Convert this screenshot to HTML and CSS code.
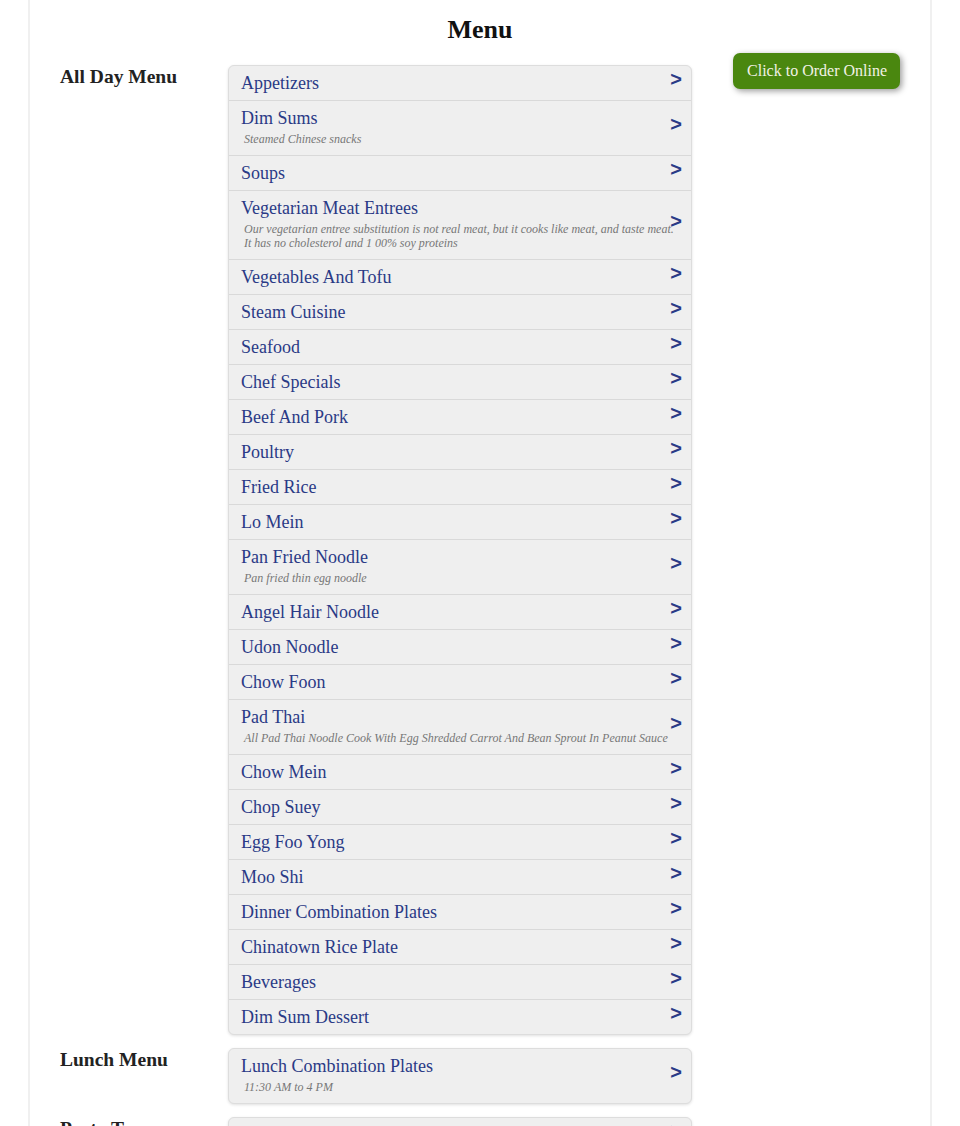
FILE: index.html
```html
<!DOCTYPE html>
<html>
<head>
<meta charset="utf-8">
<title>Menu</title>
<link rel="stylesheet" href="styles.css">
</head>
<body>
<div class="page">
  <h1 class="title">Menu</h1>
  <div class="layout">
    <div class="menus">
      <section class="group">
        <h2 class="group-label">All Day Menu</h2>
        <ul class="list">
          <li class="row"><span class="name">Appetizers</span><span class="chev">&gt;</span></li>
          <li class="row"><span class="name">Dim Sums</span><span class="desc">Steamed Chinese snacks</span><span class="chev">&gt;</span></li>
          <li class="row"><span class="name">Soups</span><span class="chev">&gt;</span></li>
          <li class="row"><span class="name">Vegetarian Meat Entrees</span><span class="desc">Our vegetarian entree substitution is not real meat, but it cooks like meat, and taste meat.<br>It has no cholesterol and 1 00% soy proteins</span><span class="chev">&gt;</span></li>
          <li class="row"><span class="name">Vegetables And Tofu</span><span class="chev">&gt;</span></li>
          <li class="row"><span class="name">Steam Cuisine</span><span class="chev">&gt;</span></li>
          <li class="row"><span class="name">Seafood</span><span class="chev">&gt;</span></li>
          <li class="row"><span class="name">Chef Specials</span><span class="chev">&gt;</span></li>
          <li class="row"><span class="name">Beef And Pork</span><span class="chev">&gt;</span></li>
          <li class="row"><span class="name">Poultry</span><span class="chev">&gt;</span></li>
          <li class="row"><span class="name">Fried Rice</span><span class="chev">&gt;</span></li>
          <li class="row"><span class="name">Lo Mein</span><span class="chev">&gt;</span></li>
          <li class="row"><span class="name">Pan Fried Noodle</span><span class="desc">Pan fried thin egg noodle</span><span class="chev">&gt;</span></li>
          <li class="row"><span class="name">Angel Hair Noodle</span><span class="chev">&gt;</span></li>
          <li class="row"><span class="name">Udon Noodle</span><span class="chev">&gt;</span></li>
          <li class="row"><span class="name">Chow Foon</span><span class="chev">&gt;</span></li>
          <li class="row"><span class="name">Pad Thai</span><span class="desc">All Pad Thai Noodle Cook With Egg Shredded Carrot And Bean Sprout In Peanut Sauce</span><span class="chev">&gt;</span></li>
          <li class="row"><span class="name">Chow Mein</span><span class="chev">&gt;</span></li>
          <li class="row"><span class="name">Chop Suey</span><span class="chev">&gt;</span></li>
          <li class="row"><span class="name">Egg Foo Yong</span><span class="chev">&gt;</span></li>
          <li class="row"><span class="name">Moo Shi</span><span class="chev">&gt;</span></li>
          <li class="row"><span class="name">Dinner Combination Plates</span><span class="chev">&gt;</span></li>
          <li class="row"><span class="name">Chinatown Rice Plate</span><span class="chev">&gt;</span></li>
          <li class="row"><span class="name">Beverages</span><span class="chev">&gt;</span></li>
          <li class="row"><span class="name">Dim Sum Dessert</span><span class="chev">&gt;</span></li>
        </ul>
      </section>
      <section class="group">
        <h2 class="group-label">Lunch Menu</h2>
        <ul class="list">
          <li class="row"><span class="name">Lunch Combination Plates</span><span class="desc">11:30 AM to 4 PM</span><span class="chev">&gt;</span></li>
        </ul>
      </section>
      <section class="group">
        <h2 class="group-label">Party Trays</h2>
        <ul class="list">
          <li class="row"><span class="name">Party Trays</span><span class="chev">&gt;</span></li>
        </ul>
      </section>
    </div>
    <aside class="side">
      <a class="order-btn" href="#">Click to Order Online</a>
    </aside>
  </div>
</div>
</body>
</html>
```

FILE: styles.css
```css
html, body {
  margin: 0;
  padding: 0;
  background: #ffffff;
}

body {
  font-family: "Liberation Serif", "Times New Roman", serif;
  color: #222222;
}

.page {
  margin: 0 28px;
  border-left: 2px solid #f0f0f0;
  border-right: 2px solid #f0f0f0;
  min-height: 1200px;
  padding: 0 30px;
}

.title {
  margin: 0;
  padding: 14px 0 7px;
  font-size: 26px;
  line-height: 32px;
  font-weight: bold;
  text-align: center;
  color: #111111;
}

.layout {
  display: flex;
  align-items: flex-start;
}

.menus {
  display: flex;
  flex-direction: column;
  gap: 13px;
  padding-top: 12px;
}

.group {
  display: flex;
  align-items: flex-start;
}

.group-label {
  width: 168px;
  flex: none;
  margin: 0;
  padding-top: 1px;
  font-size: 19.5px;
  line-height: 22px;
  font-weight: bold;
  color: #222222;
}

.list {
  width: 462px;
  margin: 0;
  padding: 0;
  list-style: none;
  background: #efefef;
  border: 1px solid #dddddd;
  border-radius: 6px;
  box-shadow: 0 1px 3px rgba(0, 0, 0, 0.12);
}

.row {
  position: relative;
  display: flex;
  flex-direction: column;
  padding: 6px 12px;
  border-top: 1px solid #d9d9d9;
}

.row:first-child {
  border-top: none;
}

.name {
  font-size: 18px;
  line-height: 22px;
  color: #2a3a86;
}

.desc {
  margin: 3px 0 3px;
  padding-left: 3px;
  font-size: 12px;
  line-height: 14px;
  font-style: italic;
  color: #777777;
}

.chev {
  position: absolute;
  right: 9px;
  top: 50%;
  transform: translateY(-50%);
  margin-top: -4px;
  font-family: "Liberation Sans", Arial, sans-serif;
  font-weight: bold;
  font-size: 20px;
  line-height: 22px;
  color: #2a3a86;
}

.side {
  flex: 1;
  display: flex;
  justify-content: flex-end;
}

.order-btn {
  display: inline-block;
  padding: 8px 13px 8px 14px;
  font-size: 16px;
  line-height: 20px;
  color: #f2f2e6;
  background: #4a870f;
  border-radius: 7px;
  text-decoration: none;
  box-shadow: 2px 2px 6px rgba(0, 0, 0, 0.4);
}
```
